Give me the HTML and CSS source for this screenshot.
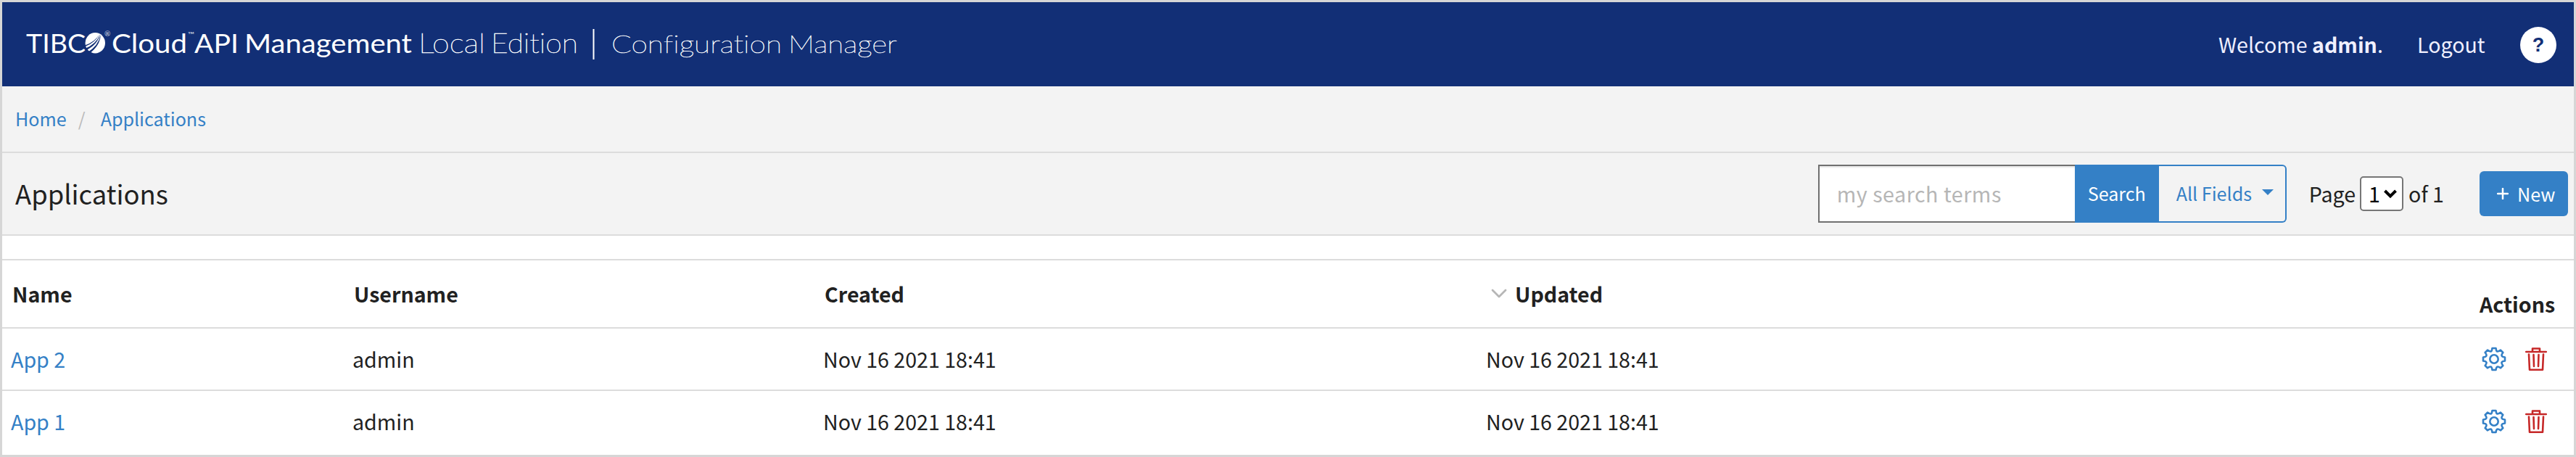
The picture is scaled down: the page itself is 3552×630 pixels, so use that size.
FILE: index.html
```html
<!DOCTYPE html>
<html lang="en">
<head>
<meta charset="utf-8">
<title>Configuration Manager - Applications</title>
<link rel="stylesheet" href="styles.css">
</head>
<body>
<div class="page">
  <header class="topbar">
    <svg class="wordmark" width="1240" height="116" viewBox="0 3 1240 116" role="img">
      <g class="brand">
        <text x="36" y="72.7" textLength="82" lengthAdjust="spacingAndGlyphs">TIBC</text>
        <text x="154" y="72.7" textLength="104" lengthAdjust="spacingAndGlyphs">Cloud</text>
        <text x="268" y="72.7" textLength="61" lengthAdjust="spacingAndGlyphs">API</text>
        <text x="337" y="72.7" textLength="231" lengthAdjust="spacingAndGlyphs">Management</text>
      </g>
      <g class="marks">
        <text x="144" y="50" font-size="10">®</text>
        <text x="259" y="51" font-size="10" textLength="9" lengthAdjust="spacingAndGlyphs">™</text>
      </g>
      <ellipse cx="131.3" cy="59.2" rx="13.7" ry="14.2" fill="#fff"/>
      <g class="swoosh">
        <path d="M117 62.500Q131 58 137 47Q131.500 59 117 64.300Z"/>
        <path d="M117 67Q132 61.500 138.300 47Q134 62.500 118 69.500Z"/>
        <path d="M121 72Q135.500 63 138.800 48Q138 63 123 74Z"/>
      </g>
      <g class="edition">
        <text x="577" y="72.7" textLength="92" lengthAdjust="spacingAndGlyphs">Local</text>
        <text x="677" y="72.7" textLength="120" lengthAdjust="spacingAndGlyphs">Edition</text>
      </g>
      <rect x="817.5" y="40" width="2" height="42" fill="#fff"/>
      <g class="product">
        <text x="843" y="72.7" textLength="235" lengthAdjust="spacingAndGlyphs">Configuration</text>
        <text x="1087" y="72.7" textLength="150" lengthAdjust="spacingAndGlyphs">Manager</text>
      </g>
    </svg>
    <div class="user">
      <span class="welcome">Welcome <b>admin</b>.</span>
      <a class="logout">Logout</a>
      <span class="help">?</span>
    </div>
  </header>

  <nav class="crumbs"><a>Home</a><span class="sep">/</span><a>Applications</a></nav>

  <section class="toolbar">
    <h1>Applications</h1>
    <div class="search">
      <input class="terms" type="text" placeholder="my search terms">
      <button class="go">Search</button>
      <button class="fields">All Fields<i class="caret"></i></button>
    </div>
    <div class="pager">
      <span>Page</span>
      <span class="select">1<svg width="20" height="14" viewBox="0 0 20 14"><path d="M2.5 3L10 10.5L17.500 3"/></svg></span>
      <span>of 1</span>
    </div>
    <button class="new"><svg width="16" height="16" viewBox="0 0 16 16"><path d="M8 1V15M1 8H15"/></svg>New</button>
  </section>

  <main class="grid">
    <div class="row head">
      <span>Name</span><span>Username</span><span>Created</span>
      <span class="sorted"><svg width="22" height="14" viewBox="0 0 22 14"><path d="M2 2L11 11L20 2"/></svg>Updated</span>
      <span class="actions-title">Actions</span>
    </div>
    <div class="row">
      <a>App 2</a><span>admin</span><span>Nov 16 2021 18:41</span><span>Nov 16 2021 18:41</span>
      <span class="actions"><svg class="gear" width="34" height="34" viewBox="0 0 34 34"><use href="#gear"/></svg><svg class="trash" width="30" height="34" viewBox="0 0 30 34"><use href="#trash"/></svg></span>
    </div>
    <div class="row">
      <a>App 1</a><span>admin</span><span>Nov 16 2021 18:41</span><span>Nov 16 2021 18:41</span>
      <span class="actions"><svg class="gear" width="34" height="34" viewBox="0 0 34 34"><use href="#gear"/></svg><svg class="trash" width="30" height="34" viewBox="0 0 30 34"><use href="#trash"/></svg></span>
    </div>
  </main>
</div>
<svg class="defs" width="0" height="0">
  <symbol id="gear" viewBox="0 0 34 34">
    <path d="M14.500 2H19.500L20 4.500Q20.300 6.500 22 6.500Q23 6.500 26 4.700L29.300 8Q27 11 27.600 12.500Q28 14 32 14.500V19.500Q28 20 27.600 21.500Q27 23 29.300 26L26 29.300Q23 27.200 21.800 27.600Q20 28 19.500 32H14.500Q14 28 12.500 27.600Q11 27 8 29.300L4.700 26Q7 23 6.400 21.500Q6 20 2 19.500V14.500Q6 14 6.400 12.500Q7 11 4.700 8L8 4.700Q11 6.500 12 6.500Q13.700 6.500 14 4.500Z"/>
    <circle cx="17" cy="17" r="5.700"/>
  </symbol>
  <symbol id="trash" viewBox="0 0 30 34">
    <path d="M1.200 7H28.800M10 6.500V2.500H20V6.500M5 10.500L6 31.700H24L25 10.500M11.500 11L12 27M18.500 11L18 27"/>
  </symbol>
</svg>
</body>
</html>
```
FILE: styles.css
```css
* { box-sizing: border-box; }
body {
  margin: 0;
  font-family: "Noto Sans CJK SC", "Noto Sans", sans-serif;
  font-size: 28.6px;
  line-height: 40px;
  color: #212121;
  background: #fff;
}
.page { height: 630px; border: 3px solid #d6d6d6; overflow: hidden; }
a { color: #3480c6; text-decoration: none; }
svg { flex: none; display: block; }
button { font: inherit; margin: 0; }
.defs { position: absolute; }

.topbar {
  height: 116px;
  background: #122f76;
  display: flex;
  justify-content: space-between;
}
.wordmark { margin-left: -3px; }
.wordmark text { fill: #fff; font-family: Lato, sans-serif; font-variant-ligatures: none; }
.brand { font-size: 37.500px; font-weight: 400; }
.marks { opacity: .8; }
.edition { font-size: 37.500px; font-weight: 100; stroke: #fff; stroke-width: .6; }
.product { font-size: 34.500px; font-weight: 100; stroke: #fff; stroke-width: .5; }
.swoosh { fill: #122f76; }
.user { display: flex; align-items: center; padding-right: 24px; color: #f0f0ff; }
.welcome { width: 274px; }
.logout { width: 142px; color: inherit; }
.help {
  width: 50px; height: 50px;
  margin-top: 2px;
  border-radius: 50%;
  background: #fff;
  color: #122f76;
  font: bold 27px/50px "Liberation Sans", sans-serif;
  text-align: center;
}

.crumbs {
  height: 92px;
  padding: 0 0 3px 18px;
  background: #f3f3f3;
  border-bottom: 2px solid #dcdcdc;
  display: flex;
  align-items: center;
  font-size: 25.100px;
}
.sep { width: 47px; padding-left: 16px; color: #bbb; }

.toolbar {
  height: 114px;
  padding: 0 8px 0 18px;
  background: #f3f3f3;
  border-bottom: 2px solid #dcdcdc;
  display: flex;
  align-items: center;
}
h1 { margin: 0 auto 2px 0; font-size: 36.400px; font-weight: 400; }
.search { display: flex; height: 80px; font-size: 25.100px; }
.terms {
  width: 354px;
  padding: 0 24px 2px;
  border: 2px solid #707070;
  border-right: 0;
  box-shadow: inset 0 2px 2px rgba(0,0,0,.1);
  font: 28.700px "Noto Sans CJK SC", sans-serif;
  letter-spacing: .5px;
}
.terms::placeholder { color: #b6b6b6; opacity: 1; }
.go { width: 116px; padding: 0 0 2px; border: 0; background: #3480c6; color: #fff; }
.fields {
  width: 176px;
  padding: 0 0 2px 24px;
  border: 2px solid #3480c6;
  border-left: 0;
  border-radius: 0 6px 6px 0;
  background: transparent;
  color: #3480c6;
  display: flex;
  align-items: center;
}
.caret {
  margin: 0 0 2px 14px;
  border: 8px solid transparent;
  border-top-color: #3480c6;
  border-bottom: 0;
}
.pager { display: flex; align-items: center; margin: 0 49px 0 31px; }
.select {
  width: 60px; height: 48px;
  margin: 0 7px 0 6px;
  padding-left: 10px;
  border: 2px solid #767676;
  border-radius: 5px;
  background: #fff;
  color: #000;
  display: flex;
  align-items: center;
}
.select svg { margin-left: 4px; fill: none; stroke: #000; stroke-width: 4; }
.new {
  width: 122px; height: 62px;
  padding: 0 0 1px 24px;
  border: 0;
  border-radius: 6px;
  background: #3480c6;
  color: #fff;
  font-size: 25.100px;
  display: flex;
  align-items: center;
}
.new svg { margin-right: 12px; fill: none; stroke: #fff; stroke-width: 2.500; stroke-linecap: round; }

.grid { margin-top: 32px; }
.row {
  height: 86px;
  padding: 0 0 0 12px;
  border-top: 2px solid #dcdcdc;
  display: grid;
  grid-template-columns: 471px 649px 914px 1fr 130px;
  align-items: center;
}
.head { height: 94px; padding-left: 14px; font-weight: 700; }
.sorted { display: flex; align-items: center; padding-left: 5px; }
.sorted svg { margin-right: 11px; fill: none; stroke: #b6b6b6; stroke-width: 2.800; stroke-linecap: round; stroke-linejoin: round; }
.actions-title { padding-top: 28px; }
.actions { display: flex; align-items: center; }
.gear, .trash { fill: none; stroke-width: 2.600; stroke-linejoin: round; stroke-linecap: round; }
.gear { margin: 0 26px 0 3px; stroke: #3480c6; }
.trash { stroke: #c62828; }
```
